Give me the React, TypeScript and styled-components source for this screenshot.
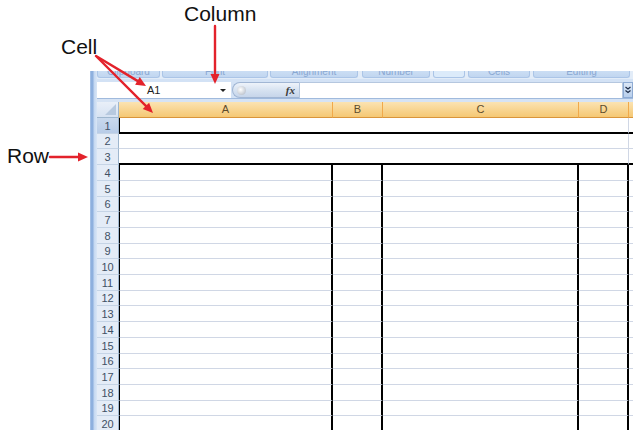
import React from 'react';
import styled, { createGlobalStyle } from 'styled-components';

const GlobalStyle = createGlobalStyle`
  html, body { margin: 0; padding: 0; background: #ffffff; }
  body { width: 633px; height: 430px; overflow: hidden; font-family: "Liberation Sans", Arial, sans-serif; }
`;

const Page = styled.div`
  position: relative;
  width: 633px;
  height: 430px;
  overflow: hidden;
  box-sizing: border-box;
  padding: 71px 0 0 90px;
  background: #ffffff;
`;

const Window = styled.div`
  display: flex;
  width: 543px;
  height: 359px;
  overflow: hidden;
`;

const Frame = styled.div`
  width: 7px;
  flex: none;
  background: linear-gradient(to right, #b8cfee 0px, #8eb0de 1px, #8eb0de 3px, #c3d7f1 4px, #d9e6f6 7px);
`;

const Main = styled.div`
  flex: 1;
  min-width: 0;
  display: flex;
  flex-direction: column;
`;

/* ---------- ribbon group labels (cut off at the top) ---------- */
const Ribbon = styled.div`
  height: 8px;
  flex: none;
  display: flex;
  gap: 2px;
  background: #e2ecf8;
  overflow: hidden;
`;

const Group = styled.div<{ $w: number; $light?: boolean; $gap?: number }>`
  width: ${p => p.$w}px;
  margin-left: ${p => p.$gap ?? 0}px;
  flex: none;
  height: 7px;
  box-sizing: border-box;
  border: 1px solid #abc5e7;
  border-top: none;
  border-radius: 0 0 3px 3px;
  background: ${p => (p.$light ? '#dcebfa' : 'linear-gradient(#cbdef4, #c1d6f0)')};
  display: flex;
  justify-content: center;
  overflow: hidden;
`;

const GroupLabel = styled.span`
  font-size: 10px;
  line-height: 10px;
  margin-top: -4px;
  color: #8aa8d2;
  white-space: nowrap;
`;

/* ---------- formula bar ---------- */
const FormulaBar = styled.div`
  height: 20px;
  flex: none;
  box-sizing: border-box;
  padding-top: 3px;
  display: flex;
  align-items: stretch;
  background: #d3e2f5;
  border-bottom: 1px solid #a0badd;
`;

const NameBox = styled.div`
  width: 134px;
  flex: none;
  background: #ffffff;
  display: flex;
  align-items: center;
  padding-left: 50px;
  box-sizing: border-box;
  font-size: 11px;
  color: #1e1e1e;
`;

const NameText = styled.span`
  flex: 1;
`;

const DropArrow = styled.span`
  width: 0;
  height: 0;
  border-left: 3px solid transparent;
  border-right: 3px solid transparent;
  border-top: 3px solid #222;
  margin-right: 5px;
`;

const FxPill = styled.div`
  width: 67px;
  flex: none;
  margin-left: 1px;
  box-sizing: border-box;
  border: 1px solid #a1b6d4;
  border-right: none;
  border-radius: 8px 0 0 8px;
  background: linear-gradient(#eef3fa, #d5e1f0 55%, #c6d5ea);
  display: flex;
  align-items: center;
  justify-content: space-between;
  padding: 0 4px 0 4px;
`;

const Knob = styled.span`
  width: 9px;
  height: 9px;
  border-radius: 50%;
  background: radial-gradient(circle at 40% 40%, #ffffff, #c3c9d2 70%, #a9b2bf);
`;

const Fx = styled.span`
  font-family: "Liberation Serif", "Times New Roman", serif;
  font-style: italic;
  font-weight: bold;
  font-size: 11px;
  color: #3a3a3a;
`;

const FormulaInput = styled.div`
  flex: 1;
  background: #ffffff;
  box-sizing: border-box;
  border: 1px solid #b5c7df;
  border-bottom: none;
`;

const Expand = styled.div`
  width: 10px;
  flex: none;
  box-sizing: border-box;
  border: 1px solid #8eabd3;
  background: linear-gradient(#dbe7f6, #b8cfec);
  display: flex;
  align-items: center;
  justify-content: center;
`;

const Band = styled.div`
  height: 3px;
  flex: none;
  background: #d6e3f4;
`;

/* ---------- sheet ---------- */
const Sheet = styled.div`
  flex: 1;
  display: flex;
  flex-direction: column;
  background: #ffffff;
`;

const HeaderRow = styled.div`
  height: 16px;
  flex: none;
  display: flex;
`;

const Corner = styled.div`
  width: 22px;
  flex: none;
  box-sizing: border-box;
  position: relative;
  background: linear-gradient(#e9eff8, #d6e2f2);
  border-right: 1px solid #9eb6ce;
  border-bottom: 1px solid #9eb6ce;
  &::after {
    content: '';
    position: absolute;
    right: 2px;
    bottom: 2px;
    width: 0;
    height: 0;
    border-left: 11px solid transparent;
    border-bottom: 11px solid #b7c9df;
  }
`;

const ColHeader = styled.div<{ $w: number }>`
  width: ${p => p.$w}px;
  flex: none;
  box-sizing: border-box;
  background: linear-gradient(#fbe3b2, #f8d592 50%, #f5c874);
  border-right: 1px solid #f1a94a;
  border-bottom: 1px solid #d9953b;
  font-size: 11px;
  line-height: 15px;
  text-align: center;
  color: #5e4c2c;
`;

const Row = styled.div<{ $h: number }>`
  height: ${p => p.$h}px;
  flex: none;
  display: flex;
`;

const RowHeader = styled.div<{ $active?: boolean }>`
  width: 22px;
  flex: none;
  box-sizing: border-box;
  background: ${p => (p.$active ? 'linear-gradient(#c9d9ee, #b8cce7)' : '#e4ecf7')};
  border-right: 1px solid #9eb6ce;
  border-bottom: 1px solid #c5d4e6;
  font-size: 11px;
  color: #3f5064;
  display: flex;
  align-items: center;
  justify-content: center;
`;

type Edge = 'grid' | 'thick' | 'none';

const Cell = styled.div<{ $w: number; $left?: boolean; $right?: Edge; $bottom?: Edge }>`
  width: ${p => p.$w}px;
  flex: none;
  box-sizing: border-box;
  background: #ffffff;
  border-left: ${p => (p.$left ? '1px solid #000' : 'none')};
  border-right: ${p =>
    p.$right === 'thick' ? '2px solid #000' : p.$right === 'none' ? 'none' : '1px solid #d0d7e5'};
  border-bottom: ${p =>
    p.$bottom === 'thick' ? '2px solid #000' : p.$bottom === 'none' ? 'none' : '1px solid #d0d7e5'};
`;

/* ---------- annotations ---------- */
const Overlay = styled.svg`
  position: absolute;
  left: 0;
  top: 0;
  pointer-events: none;
`;

const Label = styled.div<{ $x: number; $y: number }>`
  position: absolute;
  left: ${p => p.$x}px;
  top: ${p => p.$y}px;
  font-family: "Liberation Sans", Arial, sans-serif;
  font-size: 21px;
  line-height: 1;
  color: #111;
  white-space: nowrap;
`;

const RED = '#e3222b';

function Arrow({ x1, y1, x2, y2 }: { x1: number; y1: number; x2: number; y2: number }) {
  const dx = x2 - x1;
  const dy = y2 - y1;
  const len = Math.hypot(dx, dy);
  const ux = dx / len;
  const uy = dy / len;
  const hl = 10;
  const hw = 4.5;
  const bx = x2 - ux * hl;
  const by = y2 - uy * hl;
  const p1 = `${bx - uy * hw},${by + ux * hw}`;
  const p2 = `${bx + uy * hw},${by - ux * hw}`;
  return (
    <g>
      <line x1={x1} y1={y1} x2={bx + ux * 2} y2={by + uy * 2} stroke={RED} strokeWidth={2.4} strokeLinecap="round" />
      <polygon points={`${x2},${y2} ${p1} ${p2}`} fill={RED} />
    </g>
  );
}

const groups = [
  { label: 'Clipboard', w: 63, gap: 0 },
  { label: 'Font', w: 106, gap: 0 },
  { label: 'Alignment', w: 88, gap: 0 },
  { label: 'Number', w: 68, gap: 2 },
  { label: '', w: 32, gap: 1, light: true },
  { label: 'Cells', w: 62, gap: 1 },
  { label: 'Editing', w: 97, gap: 1 },
];

const cols = [
  { key: 'A', w: 214 },
  { key: 'B', w: 50 },
  { key: 'C', w: 196 },
  { key: 'D', w: 50 },
  { key: 'E', w: 40 },
];

const PITCH = 15.7;
const rowHeights = Array.from({ length: 21 }, (_, i) => Math.round((i + 1) * PITCH) - Math.round(i * PITCH));

export default function App() {
  return (
    <>
      <GlobalStyle />
      <Page>
        <Window>
          <Frame />
          <Main>
            <Ribbon>
              {groups.map((g, i) => (
                <Group key={i} $w={g.w} $gap={g.gap} $light={g.light}>
                  <GroupLabel>{g.label}</GroupLabel>
                </Group>
              ))}
            </Ribbon>
            <FormulaBar>
              <NameBox>
                <NameText>A1</NameText>
                <DropArrow />
              </NameBox>
              <FxPill>
                <Knob />
                <Fx>fx</Fx>
              </FxPill>
              <FormulaInput />
              <Expand>
                <svg width="6" height="8" viewBox="0 0 6 8">
                  <path d="M0.5 1 L3 3 L5.5 1 M0.5 4.5 L3 6.5 L5.5 4.5" stroke="#1d2b45" strokeWidth="1.2" fill="none" />
                </svg>
              </Expand>
            </FormulaBar>
            <Band />
            <Sheet>
              <HeaderRow>
                <Corner />
                {cols.map(c => (
                  <ColHeader key={c.key} $w={c.w}>
                    {c.key === 'E' ? '' : c.key}
                  </ColHeader>
                ))}
              </HeaderRow>
              {rowHeights.map((h, i) => {
                const n = i + 1;
                if (n <= 3) {
                  const bottom: Edge = n === 2 ? 'grid' : 'thick';
                  return (
                    <Row key={n} $h={h}>
                      <RowHeader $active={n === 1}>{n}</RowHeader>
                      <Cell $w={510} $left={n === 1} $bottom={bottom} />
                      <Cell $w={40} $right="none" $bottom={bottom} />
                    </Row>
                  );
                }
                return (
                  <Row key={n} $h={h}>
                    <RowHeader>{n}</RowHeader>
                    <Cell $w={214} $left $right="thick" />
                    <Cell $w={50} $right="thick" />
                    <Cell $w={196} $right="thick" />
                    <Cell $w={50} $right="thick" />
                    <Cell $w={40} $right="none" />
                  </Row>
                );
              })}
            </Sheet>
          </Main>
        </Window>

        <Overlay width={633} height={430} viewBox="0 0 633 430">
          <Arrow x1={96} y1={56} x2={146} y2={86} />
          <Arrow x1={97} y1={57} x2={153} y2={113} />
          <Arrow x1={215} y1={26} x2={215} y2={84} />
          <Arrow x1={50} y1={157} x2={88} y2={157} />
        </Overlay>
        <Label $x={184} $y={3}>Column</Label>
        <Label $x={61} $y={36}>Cell</Label>
        <Label $x={7} $y={145}>Row</Label>
      </Page>
    </>
  );
}
